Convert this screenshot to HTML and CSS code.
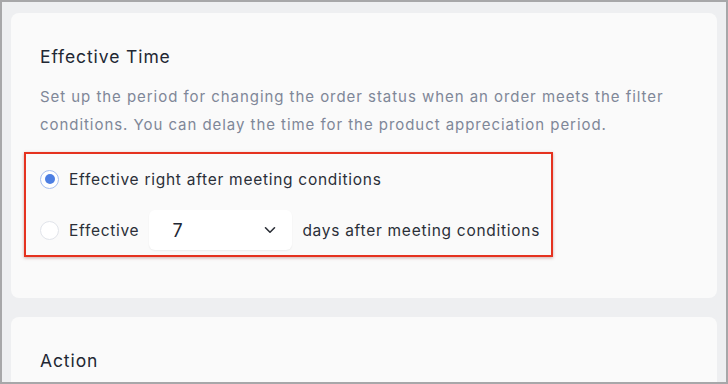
FILE: index.html
```html
<!DOCTYPE html>
<html>
<head>
<meta charset="utf-8">
<link rel="stylesheet" href="styles.css">
</head>
<body>
<div class="frame">
  <section class="card">
    <h2 class="title">Effective Time</h2>
    <p class="desc">Set up the period for changing the order status when an order meets the filter conditions. You can delay the time for the product appreciation period.</p>
    <div class="highlight">
      <label class="option">
        <span class="radio checked"><span class="dot"></span></span>
        <span class="label">Effective right after meeting conditions</span>
      </label>
      <label class="option">
        <span class="radio"></span>
        <span class="label">Effective</span>
        <span class="select">
          <span class="value">7</span>
          <svg class="chev" width="12" height="8" viewBox="0 0 12 8"><path d="M1.5 1.8 L6 6.2 L10.5 1.8" fill="none" stroke="#2a2e36" stroke-width="1.6" stroke-linecap="round" stroke-linejoin="round"/></svg>
        </span>
        <span class="label">days after meeting conditions</span>
      </label>
    </div>
  </section>
  <section class="card">
    <h2 class="title">Action</h2>
  </section>
</div>
</body>
</html>
```
FILE: styles.css
```css
* { box-sizing: border-box; }
html, body { margin: 0; padding: 0; }
body {
  width: 728px;
  height: 384px;
  overflow: hidden;
  font-family: Inter, "Noto Sans", sans-serif;
  background: #a7a7a9;
}
.frame {
  width: 728px;
  height: 384px;
  border: 2px solid #a7a7a9;
  background: #eeeff1;
  padding: 11px 9px 0 9px;
  display: flex;
  flex-direction: column;
  gap: 19px;
  overflow: hidden;
}
.card {
  background: #fafafa;
  border-radius: 8px;
  padding: 31px 29px 0 29px;
  flex-shrink: 0;
}
.card:first-child { height: 285px; }
.card:last-child { height: 120px; }
.title {
  margin: 0;
  font-size: 17.5px;
  font-weight: 400;
  line-height: 26px;
  color: #222733;
  letter-spacing: 0.9px;
}
.desc {
  margin: 13px 0 0 0;
  font-size: 15px;
  line-height: 28px;
  color: #7f8798;
  letter-spacing: 0.95px;
  width: 650px;
}
.highlight {
  margin: 13px 0 0 -16px;
  width: fit-content;
  border: 2px solid #e5321f;
  box-shadow: 0 1px 3px rgba(120, 30, 20, 0.35);
  padding: 5px 11px 5px 14px;
  display: flex;
  flex-direction: column;
  gap: 11px;
}
.option {
  height: 40px;
  display: flex;
  align-items: center;
  font-size: 15.5px;
  color: #2b2f38;
  letter-spacing: 0.72px;
}
.radio {
  width: 19px;
  height: 19px;
  border-radius: 50%;
  border: 1px solid #e1e4ea;
  background: #ffffff;
  margin-right: 10px;
  display: flex;
  align-items: center;
  justify-content: center;
  flex-shrink: 0;
}
.radio.checked { border-color: #a8bff0; }
.dot {
  width: 10px;
  height: 10px;
  border-radius: 50%;
  background: #4d7fe3;
}
.select {
  width: 143px;
  height: 40px;
  margin: 0 10px 0 10px;
  background: #ffffff;
  border-radius: 6px;
  box-shadow: 0 1px 2px rgba(0, 0, 0, 0.06);
  display: flex;
  align-items: center;
  justify-content: space-between;
  padding: 0 16px 0 23px;
  letter-spacing: 0;
}
.value {
  font-size: 18px;
  color: #222733;
}
.chev { display: block; }
```
